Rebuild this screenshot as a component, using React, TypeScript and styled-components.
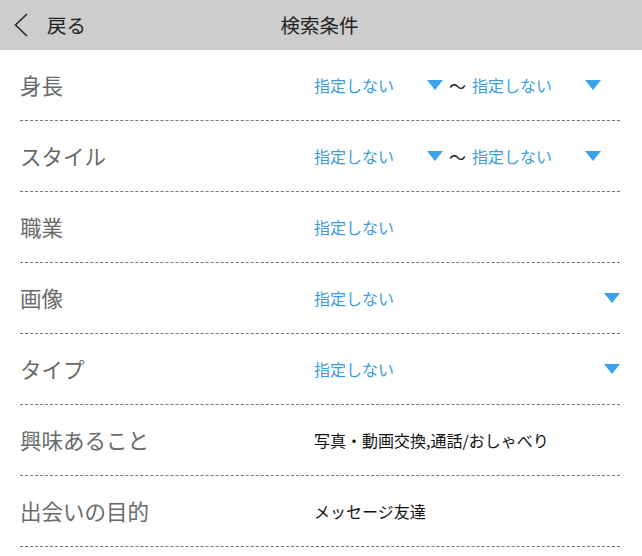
import React from 'react';
import styled, { createGlobalStyle } from 'styled-components';

const GlobalStyle = createGlobalStyle`
  html, body {
    margin: 0;
    padding: 0;
    background: #fff;
  }
  body {
    font-family: "Noto Sans CJK JP", "Noto Sans", sans-serif;
  }
`;

const Page = styled.div`
  width: 642px;
  min-height: 556px;
  background: #fff;
`;

const Header = styled.div`
  position: relative;
  display: flex;
  align-items: center;
  justify-content: center;
  height: 50px;
  background: #cdcdcd;
  line-height: 1;
`;

const BackButton = styled.div`
  position: absolute;
  left: 13px;
  top: 0;
  bottom: 0;
  display: flex;
  align-items: center;
  gap: 18px;
  font-size: 19.5px;
  color: #222;
`;

const Title = styled.div`
  font-size: 19.5px;
  color: #222;
  margin-left: -3px;
`;

const List = styled.div`
  padding: 0 22px 0 20px;
`;

const Row = styled.div`
  display: flex;
  align-items: center;
  height: 70px;
  line-height: 1;
  border-bottom: 1px dashed #777;
`;

const Label = styled.div`
  width: 294px;
  flex-shrink: 0;
  font-size: 21.5px;
  color: #6a6a6a;
`;

const Values = styled.div`
  flex: 1;
  display: flex;
  align-items: center;
`;

const Select = styled.div<{ $wide?: boolean }>`
  display: flex;
  align-items: center;
  justify-content: space-between;
  width: ${({ $wide }) => ($wide ? '100%' : '129px')};
`;

const SelectText = styled.span`
  font-size: 16px;
  color: #3b9de0;
`;

const Arrow = styled.span`
  width: 0;
  height: 0;
  border-left: 8px solid transparent;
  border-right: 8px solid transparent;
  border-top: 10px solid #3aa2ea;
`;

const Tilde = styled.span`
  width: 29px;
  text-align: center;
  font-size: 17px;
  color: #222;
`;

const PlainValue = styled.span`
  font-size: 16px;
  color: #111;
`;

const BackChevron = () => (
  <svg width="16" height="26" viewBox="0 0 16 26">
    <path d="M14 2 L2.5 13 L14 24" fill="none" stroke="#222" strokeWidth="1.5" />
  </svg>
);

const DropDown = ({ wide }: { wide?: boolean }) => (
  <Select $wide={wide}>
    <SelectText>指定しない</SelectText>
    <Arrow />
  </Select>
);

const App = () => (
  <Page>
    <GlobalStyle />
    <Header>
      <BackButton>
        <BackChevron />
        <span>戻る</span>
      </BackButton>
      <Title>検索条件</Title>
    </Header>
    <List>
      <Row>
        <Label>身長</Label>
        <Values>
          <DropDown />
          <Tilde>〜</Tilde>
          <DropDown />
        </Values>
      </Row>
      <Row>
        <Label>スタイル</Label>
        <Values>
          <DropDown />
          <Tilde>〜</Tilde>
          <DropDown />
        </Values>
      </Row>
      <Row>
        <Label>職業</Label>
        <Values>
          <SelectText>指定しない</SelectText>
        </Values>
      </Row>
      <Row>
        <Label>画像</Label>
        <Values>
          <DropDown wide />
        </Values>
      </Row>
      <Row>
        <Label>タイプ</Label>
        <Values>
          <DropDown wide />
        </Values>
      </Row>
      <Row>
        <Label>興味あること</Label>
        <Values>
          <PlainValue>写真・動画交換,通話/おしゃべり</PlainValue>
        </Values>
      </Row>
      <Row>
        <Label>出会いの目的</Label>
        <Values>
          <PlainValue>メッセージ友達</PlainValue>
        </Values>
      </Row>
    </List>
  </Page>
);

export default App;
